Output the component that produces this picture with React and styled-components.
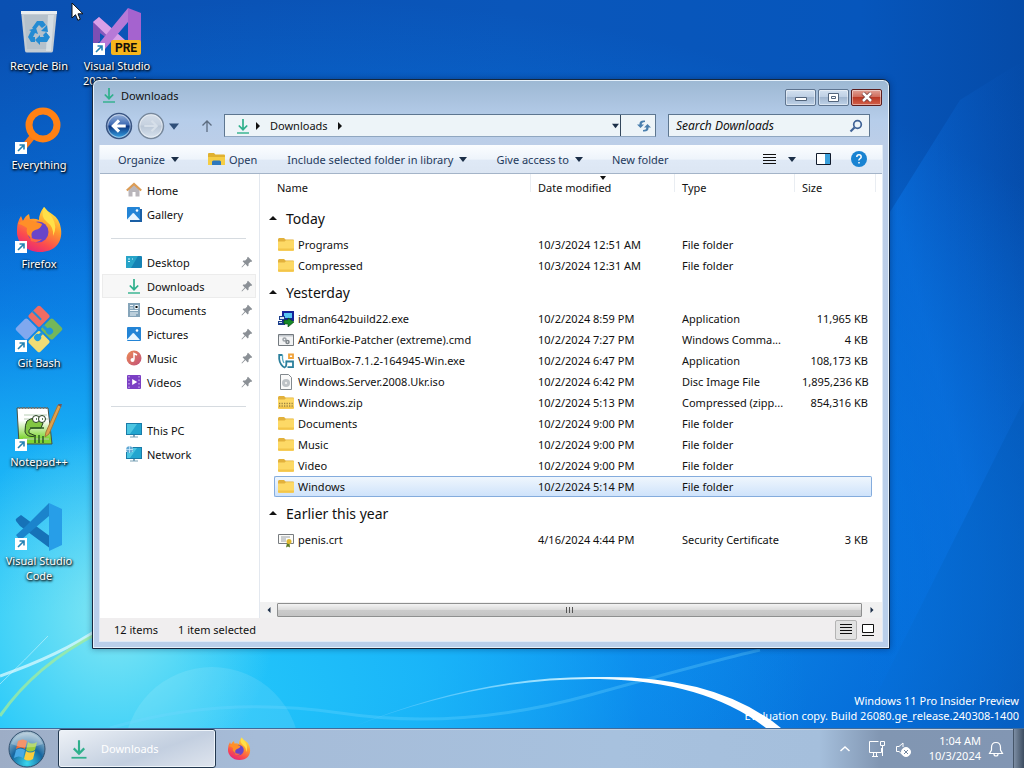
import React from "react";
import styled, { createGlobalStyle } from "styled-components";

const GlobalStyle = createGlobalStyle`
  * {
    box-sizing: border-box;
  }
  body {
    margin: 0;
    font-family: "Noto Sans", "Open Sans", sans-serif;
    font-size: 11px;
    line-height: 15px;
    color: #111;
  }
  button, input {
    font: inherit;
    color: inherit;
  }
  svg {
    display: block;
    flex: none;
    text-shadow: none;
  }
`;

const Screen = styled.div`
  display: flex;
  flex-direction: column;
  height: 100vh;
  overflow: hidden;
`;

const Desktop = styled.main`
  position: relative;
  flex: 1;
  min-height: 0;
  background:
    radial-gradient(ellipse 16% 26% at 11% 84%, rgba(170, 244, 240, 0.7), transparent),
    radial-gradient(ellipse 75% 70% at 4% 98%, #24c8fa 20%, rgba(30, 190, 250, 0.75) 50%, rgba(16, 150, 245, 0.35) 78%, transparent),
    radial-gradient(ellipse 95% 80% at 30% 80%, #0e9cf4 20%, rgba(6, 130, 240, 0.6) 60%, transparent),
    linear-gradient(90deg, #0a50b2 0%, #0a56ba 50%, #0656bc 84%, #054ba8 100%);
`;

const WallpaperArt = styled.svg`
  position: absolute;
  inset: 0;
  width: 100%;
  height: 100%;
`;

const IconGrid = styled.div`
  position: relative;
  display: grid;
  grid-template-columns: repeat(2, 78px);
  grid-auto-rows: 99px;
`;

const Shortcut = styled.button`
  grid-column: ${(props) => props.$column};
  grid-row: ${(props) => props.$row};
  display: flex;
  flex-direction: column;
  align-items: center;
  gap: 2px;
  padding: 8px 0 0;
  border: 0;
  background: none;
  color: #fff;
  text-shadow: 1px 1px 2px #000, 0 1px 3px #000;
`;

const Watermark = styled.p`
  position: absolute;
  right: 5px;
  bottom: 5px;
  margin: 0;
  color: #fff;
  text-align: right;
`;

const Pointer = styled.svg`
  position: absolute;
  left: 71px;
  top: 2px;
`;

const Window = styled.section`
  position: absolute;
  inset: 79px 134px 79px 92px;
  display: flex;
  flex-direction: column;
  padding: 0 6px 6px;
  border: 1px solid #16283e;
  border-radius: 7px 7px 0 0;
  background: linear-gradient(#9db8d3, #b6cdea 40px, #bccee8 64px, #b9cfea 100%);
  box-shadow: inset 0 0 0 1px #e6f1fb, 0 0 6px rgba(0, 20, 60, 0.4);
`;

const TitleBar = styled.header`
  display: flex;
  align-items: center;
  gap: 4px;
  height: 30px;
  padding-left: 2px;
`;

const Title = styled.h1`
  flex: 1;
  margin: 0;
  font-size: 11px;
  font-weight: 400;
`;

const CaptionButtons = styled.div`
  display: flex;
  gap: 2px;
  padding: 4px 1px 0 0;
`;

const CaptionButton = styled.button`
  display: flex;
  align-items: center;
  justify-content: center;
  width: 31px;
  height: 17px;
  padding: 0;
  border: 1px solid ${(props) => (props.$close ? "#5b1d1d" : "#5f7590")};
  border-radius: 2px;
  background: ${(props) =>
    props.$close
      ? "linear-gradient(#e0a296, #cf6a59 48%, #bb3a25 50%, #d3604a)"
      : "linear-gradient(#d3e1f0, #bdcfe4 48%, #a2b7d0 50%, #bfd2e8)"};
  box-shadow: inset 0 0 0 1px rgba(255, 255, 255, 0.45);
`;

const NavBar = styled.div`
  display: flex;
  align-items: center;
  height: 35px;
  padding: 0 13px 4px 6px;
`;

const RoundButtons = styled.div`
  display: flex;
  align-items: center;
  gap: 4px;
  margin-right: 20px;
`;

const PlainButton = styled.button`
  display: flex;
  align-items: center;
  padding: 0;
  border: 0;
  background: none;
`;

const AddressBar = styled.div`
  flex: 1;
  display: flex;
  align-items: center;
  gap: 3px;
  height: 23px;
  margin: 0 12px 0 9px;
  padding-left: 10px;
  border: 1px solid #5d7690;
  border-bottom-color: #8fa6c0;
  background: #edf4f8;
`;

const Crumb = styled.a`
  margin: 0 5px;
  color: inherit;
  text-decoration: none;
`;

const AddressTools = styled.div`
  display: flex;
  align-items: center;
  gap: 15px;
  margin-left: auto;
  padding-right: 3px;
`;

const Divided = styled.span`
  display: flex;
  align-items: center;
  height: 21px;
  padding-right: 1px;
  border-right: 1px solid #34475c;
`;

const SearchBox = styled.label`
  display: flex;
  align-items: center;
  width: 202px;
  height: 23px;
  padding: 0 6px 0 7px;
  border: 1px solid #5d7690;
  border-bottom-color: #8fa6c0;
  background: #edf4f8;
`;

const SearchInput = styled.input`
  flex: 1;
  min-width: 0;
  padding: 0;
  border: 0;
  outline: 0;
  background: none;
  font-size: 12px;
  font-style: italic;
  &::placeholder {
    color: #111;
    opacity: 1;
  }
`;

const Client = styled.div`
  flex: 1;
  display: flex;
  flex-direction: column;
  min-height: 0;
  border: 1px solid #dfeaf6;
  border-top: 0;
  background: #fff;
`;

const Toolbar = styled.div`
  display: flex;
  align-items: center;
  height: 29px;
  padding: 0 15px 0 18px;
  border-bottom: 1px solid #a4b4c8;
  background: linear-gradient(#fbfdff, #eef4fb 50%, #dfe9f6 55%, #dce6f3);
  color: #1e395b;
`;

const ToolButton = styled(PlainButton)`
  gap: ${(props) => props.$gap || 6}px;
  margin-right: ${(props) => props.$after || 29}px;
`;

const ToolbarEnd = styled.div`
  display: flex;
  align-items: center;
  gap: 20px;
  margin-left: auto;
`;

const ViewButton = styled(PlainButton)`
  gap: 12px;
`;

const Panes = styled.div`
  flex: 1;
  display: flex;
  min-height: 0;
`;

const NavPane = styled.nav`
  width: 160px;
  padding: 4px 3px 0 2px;
  border-right: 1px solid #e3e8ef;
`;

const NavItem = styled.a`
  display: flex;
  align-items: center;
  gap: 5px;
  height: 24px;
  padding: 0 2px 0 23px;
  border: 1px solid ${(props) => (props.$current ? "#ececec" : "transparent")};
  background: ${(props) => (props.$current ? "#f7f7f7" : "none")};
  color: inherit;
  text-decoration: none;
`;

const NavText = styled.span`
  flex: 1;
`;

const NavRule = styled.hr`
  margin: 12px 10px 11px 9px;
  border: 0;
  border-top: 1px solid #d6dbe0;
`;

const ListPane = styled.div`
  flex: 1;
  display: flex;
  flex-direction: column;
  min-width: 0;
`;

const ListBody = styled.div`
  flex: 1;
  min-height: 0;
  padding-right: 6px;
`;

const FileTable = styled.table`
  width: 100%;
  table-layout: fixed;
  border-collapse: separate;
  border-spacing: 0;
`;

const Col = styled.col`
  width: ${(props) => (props.$width ? `${props.$width}px` : "auto")};
`;

const Heading = styled.th`
  position: relative;
  height: 28px;
  padding: 0 0 2px ${(props) => props.$indent || 7}px;
  background: linear-gradient(#e9edf2, #e9edf2) right top / 1px 18px no-repeat;
  font-weight: 400;
  text-align: left;
`;

const SortMark = styled.svg`
  position: absolute;
  left: 50%;
  top: 2px;
  transform: translateX(-50%);
`;

const GroupHead = styled.th`
  height: 32px;
  padding: 2px 0 0 9px;
  font-size: 14px;
  font-weight: 400;
  line-height: 20px;
  text-align: left;
`;

const GroupLabel = styled.span`
  display: flex;
  align-items: center;
  gap: 9px;
`;

const Cell = styled.td`
  height: 21px;
  padding: 0 ${(props) => (props.$right ? 4 : 0)}px 0 7px;
  border: 0 solid #84acdd;
  text-align: ${(props) => (props.$right ? "right" : "left")};
  white-space: nowrap;
`;

const NameCell = styled(Cell)`
  padding-left: ${(props) => (props.$selected ? 3 : 4)}px;
`;

const FileRow = styled.tr`
  ${(props) =>
    props.$selected &&
    `
    ${Cell} {
      border-top-width: 1px;
      border-bottom-width: 1px;
      background: linear-gradient(#eff6fd, #cfe3fb);
    }
    ${Cell}:nth-child(2) {
      border-left-width: 1px;
      border-radius: 2px 0 0 2px;
    }
    ${Cell}:last-child {
      border-right-width: 1px;
      border-radius: 0 2px 2px 0;
    }
  `}
`;

const FileName = styled.span`
  display: flex;
  align-items: center;
  gap: 4px;
`;

const ScrollBar = styled.div`
  display: flex;
  align-items: center;
  height: 16px;
  background: #f1f1f1;
`;

const ScrollArrow = styled(PlainButton)`
  justify-content: center;
  width: ${(props) => props.$width}px;
`;

const ScrollThumb = styled.div`
  flex: 1;
  display: flex;
  align-items: center;
  justify-content: center;
  height: 14px;
  border: 1px solid #8e8f8f;
  border-radius: 1px;
  background: linear-gradient(#f3f3f3, #dcdcdc 48%, #cbcbcb 52%, #c4c4c4);
`;

const StatusBar = styled.footer`
  display: flex;
  align-items: center;
  gap: 20px;
  height: 23px;
  padding: 0 7px 0 14px;
  background: #f0eeef;
`;

const StatusViews = styled.div`
  display: flex;
  align-items: center;
  gap: 4px;
  margin-left: auto;
`;

const StatusView = styled(PlainButton)`
  justify-content: center;
  width: ${(props) => (props.$pressed ? 22 : 14)}px;
  height: 20px;
  border: 1px solid ${(props) => (props.$pressed ? "#b4b4b4" : "transparent")};
  border-radius: 2px;
  background: ${(props) => (props.$pressed ? "#e2e2e2" : "none")};
`;

const Taskbar = styled.footer`
  display: flex;
  align-items: center;
  height: 40px;
  border-top: 1px solid #3f6b9c;
  background: linear-gradient(90deg, #9dadc6, #a6bcd8 25%, #a7c1de 60%, #a5bfdc 80%, #8196b2 86%, #8296b3);
  box-shadow: inset 0 1px 0 #c2d0e0;
`;

const StartButton = styled(PlainButton)`
  justify-content: center;
  width: 58px;
  padding-right: 4px;
`;

const TaskButton = styled.button`
  display: flex;
  align-items: center;
  gap: 12px;
  width: 158px;
  height: 39px;
  padding: 0 10px;
  margin-right: 11px;
  border: 1px solid #22384f;
  border-radius: 3px;
  background: linear-gradient(160deg, #eef2f7, #c9d4e3 50%, #c3cfe0 60%, #dfe5ee);
  box-shadow: inset 0 0 0 1px #eef4fa;
  color: #fff;
`;

const Tray = styled.div`
  display: flex;
  align-items: center;
  gap: 9px;
  height: 100%;
  margin-left: auto;
  color: #fff;
`;

const HiddenIcons = styled(PlainButton)`
  margin-right: 4px;
`;

const Clock = styled.time`
  margin: 0 -2px 0 7px;
  padding-bottom: 2px;
  text-align: right;
`;

const ShowDesktop = styled.button`
  width: 11px;
  height: 100%;
  padding: 0;
  border: 0;
  border-left: 1px solid #46566a;
  background: linear-gradient(90deg, #7d8ea4, #3c4c60);
`;

const Caret = ({ dir = "down", size = 8, color = "#1c2f48" }) => {
  const points = {
    down: "0,2 8,2 4,7",
    up: "0,5 8,5 4,1",
    right: "2,0 6,4 2,8",
    left: "6,0 2,4 6,8",
  };
  return (
    <svg width={size} height={size} viewBox="0 0 8 8" aria-hidden="true">
      <polygon points={points[dir]} fill={color} />
    </svg>
  );
};

const DownloadIcon = ({ size = 16 }) => (
  <svg width={size} height={size} viewBox="0 0 16 16" fill="none" stroke="#2fb08c" aria-hidden="true">
    <path d="M8 1v10.5M3.8 7.5 8 11.700l4.200-4.200" strokeWidth="1.700" />
    <path d="M2 15h12" strokeWidth="1.400" />
  </svg>
);

const FolderIcon = ({ zip }) => (
  <svg width="16" height="16" viewBox="0 0 16 16" aria-hidden="true">
    <path d="M0 2.500Q0 1 1.200 1H6l1.600 1.600H15q1 0 1 1V6H0z" fill="#e2b13c" />
    <path d="M0 4.500h6.500L8 3.200h8v9.500q0 1-1 1H1q-1 0-1-1z" fill="#fdd966" />
    <path d="M0 11.500h16v1.300q0 .9-1 .9H1q-1 0-1-.9z" fill="#f3c549" />
    {zip && <path d="M1 8.500h14M1 11h14" stroke="#9b8443" strokeWidth="1.400" strokeDasharray="1.300 1.200" />}
  </svg>
);

const OpenFolderIcon = () => (
  <svg width="17" height="16" viewBox="0 0 17 16" aria-hidden="true">
    <path d="M0 3q0-1 1-1h5l1.400 1.500H16q1 0 1 1V14H0z" fill="#e0b130" />
    <path d="M0 6h17v8H0z" fill="#f5cd45" />
    <path d="M4 14v-3q0-1.500 1.500-1.500h6q1.500 0 1.500 1.500v3z" fill="#2c77bd" />
  </svg>
);

const PinIcon = () => (
  <svg width="12" height="12" viewBox="0 0 12 12" aria-hidden="true">
    <path d="M7 .8 11.200 5l-1 .9-.7-.1-2 2 .1 1.800-.9.8-2.300-2.300L1 11.400l-.5-.5L3.700 7.500 1.600 5.300l.8-.8 1.800.1 2-2-.1-.8z" fill="#8b9096" />
  </svg>
);

const HomeIcon = () => (
  <svg width="16" height="16" viewBox="0 0 16 16" aria-hidden="true">
    <path d="M2.500 7 8 2.500 13.500 7v7.500h-4V10h-3v4.500h-4z" fill="#b9b6bb" />
    <path d="M.8 8.500 8 2l7.200 6.500" fill="none" stroke="#dc9c55" strokeWidth="2.200" />
  </svg>
);

const PictureIcon = ({ stack }) => (
  <svg width="16" height="16" viewBox="0 0 16 16" aria-hidden="true">
    {stack && <path d="M4 3h12v13H4z" fill="#1a5fa5" />}
    <rect x="1" y="1" width={stack ? 13 : 14} height={stack ? 13 : 14} rx="1" fill="#2384d6" />
    <path d="M1 13.500 6.500 7.500q.8-.8 1.600 0l5.500 6v.5H1z" fill="#e8f5ff" />
    <circle cx="11" cy="4.500" r="1.300" fill="#fff" />
  </svg>
);

const MonitorIcon = ({ network, panel }) => (
  <svg width="16" height="16" viewBox="0 0 16 16" aria-hidden="true">
    {panel ? (
      <>
        <rect y="2" width="16" height="12" rx="1" fill="#1582b4" />
        <path d="M0 3q0-1 1-1h11L5 14H1q-1 0-1-1z" fill="#27a4c8" />
        <path d="M2 5h2M2 7.500h2M6 5h1" stroke="#d5f5ff" />
      </>
    ) : (
      <>
        <path d="M0 1h16v12H0z" fill="#1a7ba8" />
        <path d="M1 2h14v10H1z" fill="#22a5cf" />
        <path d="M1 2h10L4 12H1z" fill="#4cc6e2" />
        <path d="M7 13h2v1.500h3v1H4v-1h3z" fill="#7da4b8" />
      </>
    )}
    {network && (
      <>
        <path d="M0 0h6.500v6H0z" fill="#fff" />
        <circle cx="3.500" cy="3.500" r="3.300" fill="#62a8d4" />
        <path d="M0 3.500h7M3.500 0v7" stroke="#d8efff" strokeWidth=".7" />
      </>
    )}
  </svg>
);

const DocumentIcon = () => (
  <svg width="16" height="16" viewBox="0 0 16 16" aria-hidden="true">
    <path d="M2 1h12v14H2z" fill="#86a5ba" />
    <path d="M4 3.500h3M4 6h3M4 8.500h8M4 11h8M4 13h6M9 3.500h3v3H9z" stroke="#eff7fb" />
  </svg>
);

const MusicIcon = () => (
  <svg width="16" height="16" viewBox="0 0 16 16" aria-hidden="true">
    <defs>
      <linearGradient id="music" x1="0" x2="1" y2="1">
        <stop stopColor="#ec8c55" />
        <stop offset="1" stopColor="#c2507a" />
      </linearGradient>
    </defs>
    <circle cx="8" cy="8" r="7.500" fill="url(#music)" />
    <path d="M8 9.500V3.500l3 1.500" fill="none" stroke="#fff" strokeWidth="1.500" />
    <circle cx="6.500" cy="10" r="2" fill="#fff" />
  </svg>
);

const VideoIcon = () => (
  <svg width="16" height="16" viewBox="0 0 16 16" aria-hidden="true">
    <rect x="1" y="1" width="14" height="14" rx="1" fill="#7b3fc4" />
    <path d="M3 2v12M13 2v12" stroke="#d6bdf4" strokeDasharray="1.500 2" />
    <path d="M6.200 5v6l5-3z" fill="#fff" />
  </svg>
);

const InstallerIcon = () => (
  <svg width="16" height="16" viewBox="0 0 16 16" aria-hidden="true">
    <path d="M4 0h12v10H4z" fill="#16239a" />
    <path d="M6 2h8v5H6z" fill="#58c5f2" />
    <path d="M1 5h6v4H1zM0 10h7v4H0z" fill="#1c3f8c" />
    <path d="M2 6h4v2H2zM1 11h3v1H1z" fill="#e0e8f0" />
    <path d="M6 9h4V7l6 4-6 5v-3H6z" fill="#168a28" stroke="#07400e" strokeWidth=".6" />
  </svg>
);

const ScriptIcon = () => (
  <svg width="16" height="16" viewBox="0 0 16 16" aria-hidden="true">
    <path d="M.5 2.500h15v11H.5z" fill="#f2f3f4" stroke="#73797e" />
    <path d="M1 3h14v1.500H1z" fill="#c0c5ca" />
    <circle cx="6.500" cy="7.500" r="1.500" fill="none" stroke="#9da3a8" strokeWidth="1.500" />
    <circle cx="9.500" cy="10" r="1.500" fill="none" stroke="#7d8489" strokeWidth="1.500" />
  </svg>
);

const VirtualBoxIcon = () => (
  <svg width="16" height="16" viewBox="0 0 16 16" fill="none" aria-hidden="true">
    <path d="M4.500 2H1.200v4q.3 3 2 5.500T6.500 14.500q1.800-.5 1.800-3V7.500" stroke="#2b7f9c" strokeWidth="1.800" />
    <path d="M4.500 2v3.500q.2 2 1.500 4.500" stroke="#55aac2" strokeWidth="1.300" />
    <path d="M8.500 8.500H15v5.700H9.500" stroke="#2b7f9c" strokeWidth="1.800" />
    <path d="M11 1.500h4v3.500h-4z" stroke="#f0a23a" strokeWidth="1.800" />
  </svg>
);

const DiscFileIcon = () => (
  <svg width="16" height="16" viewBox="0 0 16 16" aria-hidden="true">
    <path d="M2.500.5h8l3 3v12h-11z" fill="#fafafa" stroke="#83898e" />
    <circle cx="8" cy="9" r="4" fill="#bdc2c6" />
    <circle cx="8" cy="9" r="1.200" fill="#eee" />
  </svg>
);

const CertificateIcon = () => (
  <svg width="16" height="16" viewBox="0 0 16 16" aria-hidden="true">
    <path d="M.5 2.500h15v9H.5z" fill="#fbfbf8" stroke="#787c80" />
    <path d="M3 5h9M3 7h5M3 9h5" stroke="#9aa0a6" />
    <path d="m9 11-1 4.500 2-1 2 1L11.500 11z" fill="#5d7a25" />
    <circle cx="11" cy="9.500" r="2.500" fill="#dfb82e" />
  </svg>
);

const ShortcutArrow = () => (
  <>
    <path d="M0 35h12v12H0z" fill="#fff" />
    <path d="M3 44 9 38M4.500 38H9v4.500" fill="none" stroke="#2382b4" strokeWidth="1.600" />
  </>
);

const FirefoxArt = () => (
  <>
    <defs>
      <linearGradient id="fox" x1=".8" y1="0" x2=".3" y2="1">
        <stop stopColor="#fff04a" />
        <stop offset=".4" stopColor="#ff9a2c" />
        <stop offset=".75" stopColor="#fb4a4f" />
        <stop offset="1" stopColor="#e4257c" />
      </linearGradient>
    </defs>
    <path d="M29 1q3 4 8 7 8 5 9 15c2 14-7 23-21 23S1 36 2 24q0-8 4-14l2 5q2-5 6-7l1 5q5-1 9 1 0-7 5-13z" fill="url(#fox)" />
    <circle cx="23" cy="26" r="10.500" fill="#6a45c9" />
    <path d="M3 18q5-5 12-4l6 2q4 1 6 2-1 5-7 6-5 2-3 8-7-3-5-10Q6 18 3 18z" fill="#ff8f28" />
    <path d="M29 1q5 6 8 10 6 10 1 19 1-9-6-14-7-5-3-15z" fill="#ffe048" />
    <path d="M14 29q4 6 13 4-4 5-11 2z" fill="#ff6840" />
  </>
);

const Art = ({ children, arrow = true }) => (
  <svg width="48" height="48" viewBox="0 0 48 48" aria-hidden="true">
    {children}
    {arrow && <ShortcutArrow />}
  </svg>
);

const RecycleArt = () => (
  <Art arrow={false}>
    <path d="M6 3h36l-4 40q-.3 1.500-2 1.500H12q-1.700 0-2-1.500z" fill="#c4ccd3" />
    <path d="M6 3h36v3H6z" fill="#e9eef1" />
    <path d="M9 7h30l-3 34H12z" fill="#afbcc7" opacity=".7" />
    <path d="M33 7h6l-3 36h-5z" fill="#dfe5e9" opacity=".8" />
    <g fill="#238bd3">
      <path d="m17 20 5-7h6l3 4-4 3-3-3-4 5z" />
      <path d="m32 17 1 7-7-1zM31 24l4 5-3 5h-7v-5h4l-1-2z" />
      <path d="m25 27-5 5 5 5zM20 29v5h-4l-3-5 3-6-2-1 7-2 2 6-3-1-2 4z" />
    </g>
  </Art>
);

const VisualStudioArt = () => (
  <Art>
    <path d="M0 14 6 9l31 28-7 5L0 20z" fill="#8459bd" />
    <path d="M0 14v25l7-6V19z" fill="#7d4fb4" />
    <path d="M0 14 6 9l26 23-7 6z" fill="#d9a0e8" />
    <path d="M3 39 35 0v14L12 41z" fill="#b779d7" />
    <path d="m35 0 13 5v36H35z" fill="#a563cf" />
    <rect x="18" y="32" width="30" height="15" rx="2" fill="#f7b51d" />
    <text x="33" y="44" textAnchor="middle" fontFamily="Roboto, sans-serif" fontSize="12" fontWeight="700" fill="#16100a">
      PRE
    </text>
  </Art>
);

const EverythingArt = () => (
  <Art>
    <path d="m18 29-9 11" stroke="#f5781a" strokeWidth="6" />
    <circle cx="28" cy="18" r="14" fill="none" stroke="#ff8114" strokeWidth="7" />
  </Art>
);

const FirefoxDesktopArt = () => (
  <Art>
    <FirefoxArt />
  </Art>
);

const GitArt = () => (
  <Art>
    <g transform="rotate(45 24 24)">
      <rect x="7" y="7" width="16" height="16" rx="2" fill="#ef6c63" />
      <rect x="25" y="7" width="16" height="16" rx="2" fill="#74b75a" />
      <rect x="7" y="25" width="16" height="16" rx="2" fill="#80a8ef" />
      <rect x="25" y="25" width="16" height="16" rx="2" fill="#f2dc75" />
      <path d="M7 16h12" stroke="#1f8fd6" strokeWidth="2" />
      <path d="M24 19h8M29 24v8" stroke="#1f95d8" strokeWidth="3" />
      <circle cx="33" cy="18" r="3.500" fill="#1f95d8" />
      <circle cx="29" cy="31" r="3.500" fill="#1f9ce0" />
    </g>
  </Art>
);

const NotepadArt = () => (
  <Art>
    <defs>
      <linearGradient id="pad" x2="0" y2="1">
        <stop offset=".35" stopColor="#fff" />
        <stop offset=".85" stopColor="#7ed532" />
      </linearGradient>
    </defs>
    <path d="M2 4h31l4 36H4z" fill="url(#pad)" stroke="#465145" />
    <path d="M4 4h29" stroke="#777" strokeWidth="2" strokeDasharray="1 2" />
    <path d="M9 11h23M9 15h24M8 35h26" stroke="#b9ceb7" />
    <path d="M12 17q7-5 13-1l3 3-2 5h-7q-6 0-5 5l7 3q-9 2-11-4 0-8 2-11z" fill="#83c742" stroke="#263e20" />
    <circle cx="21" cy="15" r="3.500" fill="#fff" stroke="#263e20" />
    <circle cx="27" cy="15" r="3.500" fill="#fff" stroke="#263e20" />
    <path d="M21 15h1M27 15h1M15 24h14M20 33v6M24 31v8M28 32v7" stroke="#2c5e25" strokeWidth="1.500" />
    <path d="m30 33 1-5L43 1l3 1-12 28z" fill="#e0a14c" stroke="#a3773a" />
    <path d="m43 1 1-2 3 1-1 3z" fill="#6d5960" />
  </Art>
);

const CodeArt = () => (
  <Art>
    <path d="M1 18q-1-2 1-3l4-3 30 22v12L5 23z" fill="#1672b8" />
    <path d="m1 32 10-9L34 0v13L7 36q-2 1-3 0z" fill="#1b84cc" />
    <path d="m34 0 13 6v36l-13 6z" fill="#279ee8" />
  </Art>
);

const StartOrb = () => (
  <svg width="38" height="38" viewBox="0 0 38 38" aria-hidden="true">
    <defs>
      <radialGradient id="orb" cx=".5" cy=".9" r=".9">
        <stop stopColor="#39d7ee" />
        <stop offset=".5" stopColor="#16669f" />
        <stop offset="1" stopColor="#b6cbd8" />
      </radialGradient>
    </defs>
    <circle cx="19" cy="19" r="18" fill="url(#orb)" stroke="#31506e" />
    <path d="M10 11q5-3 9 0l-2 8q-4-3-9 0z" fill="#ef6b32" />
    <path d="M20 12q4 3 9 0l-2 8q-5 3-9 0z" fill="#9acb3d" />
    <path d="M8 20q4-3 9 0l-2 8q-4-3-9 0z" fill="#48a9e5" />
    <path d="M18 21q4 3 9 0l-2 8q-5 3-9 0z" fill="#fbcd3c" />
    <path d="M3 14a17 17 0 0 1 32 0Q19 21 3 14z" fill="#fff" opacity=".28" />
  </svg>
);

const NavArrow = ({ forward }) => (
  <svg width="28" height="28" viewBox="0 0 27 27" aria-hidden="true">
    <defs>
      <linearGradient id={forward ? "fwd" : "back"} x2="0" y2="1">
        <stop stopColor={forward ? "#d5dfea" : "#9cb6dc"} />
        <stop offset=".46" stopColor={forward ? "#c6d1df" : "#3c68b2"} />
        <stop offset=".5" stopColor={forward ? "#b9c6d6" : "#0d3580"} />
        <stop offset="1" stopColor={forward ? "#d9e4f0" : "#37a6e8"} />
      </linearGradient>
    </defs>
    <circle
      cx="13.500"
      cy="13.500"
      r="12"
      fill={forward ? "url(#fwd)" : "url(#back)"}
      stroke={forward ? "#77889c" : "#3b5683"}
      strokeWidth="1.500"
    />
    <circle cx="13.500" cy="13.500" r="10.800" fill="none" stroke="#fff" opacity=".5" />
    <path
      d={forward ? "M7 13.500h12M14 8.500l5 5-5 5" : "M20 13.500H8M13.500 8l-5.500 5.500 5.500 5.500"}
      fill="none"
      stroke={forward ? "#d6dfe9" : "#fff"}
      strokeWidth={forward ? 2 : 3}
    />
  </svg>
);

const Waves = () => (
  <WallpaperArt viewBox="0 0 1024 728" preserveAspectRatio="none" fill="none" aria-hidden="true">
    <defs>
      <linearGradient id="arc">
        <stop stopColor="#5cc8ff" stopOpacity=".3" />
        <stop offset=".4" stopColor="#8ddcff" />
        <stop offset=".65" stopColor="#fff" />
      </linearGradient>
      <linearGradient id="beam" x1="0" y1="1" x2="1" y2="0">
        <stop stopColor="#0078f0" stopOpacity="0" />
        <stop offset=".5" stopColor="#0a74e6" stopOpacity=".55" />
        <stop offset="1" stopColor="#0a5cc8" stopOpacity="0" />
      </linearGradient>
    </defs>
    <path d="M860 728V260L960 100l64-40v340z" fill="url(#beam)" />
    <circle cx="212" cy="755" r="88" fill="#fff" opacity=".1" />
    <path d="M110 728Q220 695 340 713T590 695 760 650" stroke="#6fd8ff" strokeWidth="3" opacity=".3" />
    <path d="M350 728Q480 677 600 679 705 681 766 728h15Q716 675 600 677 480 675 350 728z" fill="url(#arc)" />
    <path d="M0 676Q60 655 100 628" stroke="#e4fcff" strokeWidth="3" opacity=".7" />
    <path d="M0 716Q35 665 100 632" stroke="#a3ec9a" strokeWidth="3" opacity=".75" />
    <path d="M0 684Q25 660 48 636" stroke="#e4fcff" opacity=".5" />
  </WallpaperArt>
);

const shortcuts = [
  { label: ["Recycle Bin"], art: RecycleArt, column: 1, row: 1 },
  { label: ["Everything"], art: EverythingArt, column: 1, row: 2 },
  { label: ["Firefox"], art: FirefoxDesktopArt, column: 1, row: 3 },
  { label: ["Git Bash"], art: GitArt, column: 1, row: 4 },
  { label: ["Notepad++"], art: NotepadArt, column: 1, row: 5 },
  { label: ["Visual Studio", "Code"], art: CodeArt, column: 1, row: 6 },
  { label: ["Visual Studio", "2022 Preview"], art: VisualStudioArt, column: 2, row: 1 },
];

const places = [
  [
    { label: "Home", icon: <HomeIcon /> },
    { label: "Gallery", icon: <PictureIcon stack /> },
  ],
  [
    { label: "Desktop", icon: <MonitorIcon panel />, pinned: true },
    { label: "Downloads", icon: <DownloadIcon />, pinned: true, current: true },
    { label: "Documents", icon: <DocumentIcon />, pinned: true },
    { label: "Pictures", icon: <PictureIcon />, pinned: true },
    { label: "Music", icon: <MusicIcon />, pinned: true },
    { label: "Videos", icon: <VideoIcon />, pinned: true },
  ],
  [
    { label: "This PC", icon: <MonitorIcon /> },
    { label: "Network", icon: <MonitorIcon network /> },
  ],
];

const groups = [
  {
    title: "Today",
    files: [
      { name: "Programs", date: "10/3/2024 12:51 AM", type: "File folder", icon: <FolderIcon /> },
      { name: "Compressed", date: "10/3/2024 12:31 AM", type: "File folder", icon: <FolderIcon /> },
    ],
  },
  {
    title: "Yesterday",
    files: [
      { name: "idman642build22.exe", date: "10/2/2024 8:59 PM", type: "Application", size: "11,965 KB", icon: <InstallerIcon /> },
      { name: "AntiForkie-Patcher (extreme).cmd", date: "10/2/2024 7:27 PM", type: "Windows Comma...", size: "4 KB", icon: <ScriptIcon /> },
      { name: "VirtualBox-7.1.2-164945-Win.exe", date: "10/2/2024 6:47 PM", type: "Application", size: "108,173 KB", icon: <VirtualBoxIcon /> },
      { name: "Windows.Server.2008.Ukr.iso", date: "10/2/2024 6:42 PM", type: "Disc Image File", size: "1,895,236 KB", icon: <DiscFileIcon /> },
      { name: "Windows.zip", date: "10/2/2024 5:13 PM", type: "Compressed (zipp...", size: "854,316 KB", icon: <FolderIcon zip /> },
      { name: "Documents", date: "10/2/2024 9:00 PM", type: "File folder", icon: <FolderIcon /> },
      { name: "Music", date: "10/2/2024 9:00 PM", type: "File folder", icon: <FolderIcon /> },
      { name: "Video", date: "10/2/2024 9:00 PM", type: "File folder", icon: <FolderIcon /> },
      { name: "Windows", date: "10/2/2024 5:14 PM", type: "File folder", icon: <FolderIcon />, selected: true },
    ],
  },
  {
    title: "Earlier this year",
    files: [
      { name: "penis.crt", date: "4/16/2024 4:44 PM", type: "Security Certificate", size: "3 KB", icon: <CertificateIcon /> },
    ],
  },
];

const FileList = () => (
  <FileTable>
    <colgroup>
      <Col $width={14} />
      <Col />
      <Col $width={144} />
      <Col $width={120} />
      <Col $width={77} />
      <Col $width={4} />
    </colgroup>
    <thead>
      <tr>
        <Heading colSpan={2} $indent={17}>Name</Heading>
        <Heading>
          Date modified
          <SortMark width="6" height="4" viewBox="0 0 6 4" aria-hidden="true">
            <path d="M0 0h6L3 4z" fill="#111" />
          </SortMark>
        </Heading>
        <Heading>Type</Heading>
        <Heading colSpan={2}>Size</Heading>
      </tr>
    </thead>
    {groups.map((group) => (
      <tbody key={group.title}>
        <tr>
          <GroupHead colSpan={6} scope="rowgroup">
            <GroupLabel>
              <Caret dir="up" color="#111" />
              {group.title}
            </GroupLabel>
          </GroupHead>
        </tr>
        {group.files.map((file) => (
          <FileRow key={file.name} $selected={file.selected}>
            <td />
            <NameCell $selected={file.selected}>
              <FileName>
                {file.icon}
                {file.name}
              </FileName>
            </NameCell>
            <Cell>{file.date}</Cell>
            <Cell>{file.type}</Cell>
            <Cell $right>{file.size}</Cell>
          </FileRow>
        ))}
      </tbody>
    ))}
  </FileTable>
);

const Explorer = () => (
  <Window aria-label="Downloads">
    <TitleBar>
      <DownloadIcon />
      <Title>Downloads</Title>
      <CaptionButtons>
        <CaptionButton aria-label="Minimize">
          <svg width="12" height="9">
            <path d="M.5 4.500h11v3H.5z" fill="#fff" stroke="#53657c" />
          </svg>
        </CaptionButton>
        <CaptionButton aria-label="Maximize">
          <svg width="11" height="9">
            <path d="M.5.500h10v8H.5zM3.500 3.500h4v2h-4z" fill="#fff" stroke="#53657c" />
          </svg>
        </CaptionButton>
        <CaptionButton $close aria-label="Close">
          <svg width="12" height="10" viewBox="0 0 12 10">
            <path d="m2 1 8 8M10 1 2 9" stroke="#6d3434" strokeWidth="4" />
            <path d="m2 1 8 8M10 1 2 9" stroke="#fff" strokeWidth="2.500" />
          </svg>
        </CaptionButton>
      </CaptionButtons>
    </TitleBar>
    <NavBar>
      <RoundButtons>
        <PlainButton aria-label="Back"><NavArrow /></PlainButton>
        <PlainButton aria-label="Forward"><NavArrow forward /></PlainButton>
        <PlainButton aria-label="Recent locations"><Caret size={10} color="#2f4f79" /></PlainButton>
      </RoundButtons>
      <PlainButton aria-label="Up">
        <svg width="16" height="16" fill="none" stroke="#5c6c80" strokeWidth="1.300">
          <path d="M8 14V3M3.500 7.500 8 3l4.500 4.500" />
        </svg>
      </PlainButton>
      <AddressBar>
        <DownloadIcon />
        <PlainButton aria-label="Browse folders"><Caret dir="right" color="#111" /></PlainButton>
        <Crumb href="#downloads">Downloads</Crumb>
        <Caret dir="right" color="#111" />
        <AddressTools>
          <Divided>
            <PlainButton aria-label="Previous locations"><Caret size={7} /></PlainButton>
          </Divided>
          <PlainButton aria-label="Refresh">
            <svg width="16" height="14" viewBox="0 0 16 14" fill="#4a7fae">
              <path d="M9 1.500q-6-.5-5.500 4H1l3.500 3.500L8 5.500H5.700Q5.500 3 9 3z" />
              <path d="M7 12.500q6 .5 5.500-4H15L11.500 5 8 8.500h2.300q.2 2.500-3.300 2.500z" />
            </svg>
          </PlainButton>
        </AddressTools>
      </AddressBar>
      <SearchBox>
        <SearchInput type="search" placeholder="Search Downloads" aria-label="Search Downloads" />
        <svg width="14" height="14" fill="none" stroke="#3f6296" aria-hidden="true">
          <circle cx="8.500" cy="5.500" r="3.800" strokeWidth="1.700" />
          <path d="M5.500 8.500 1.500 12.500" strokeWidth="2.200" />
        </svg>
      </SearchBox>
    </NavBar>
    <Client>
      <Toolbar>
        <ToolButton>Organize <Caret /></ToolButton>
        <ToolButton $gap={4} $after={30}><OpenFolderIcon />Open</ToolButton>
        <ToolButton>Include selected folder in library <Caret /></ToolButton>
        <ToolButton>Give access to <Caret /></ToolButton>
        <ToolButton>New folder</ToolButton>
        <ToolbarEnd>
          <ViewButton aria-label="Change view">
            <svg width="13" height="11" stroke="#111">
              <path d="M0 .5h13M0 3.500h13M0 6.500h13M0 9.500h13" />
            </svg>
            <Caret />
          </ViewButton>
          <PlainButton aria-label="Preview pane">
            <svg width="15" height="12">
              <path d="M.5.500h14v11H.5z" fill="#fff" stroke="#111b2c" />
              <path d="M9 1h5v10H9z" fill="#3aa0dc" />
            </svg>
          </PlainButton>
          <PlainButton aria-label="Help">
            <svg width="16" height="16" viewBox="0 0 16 16">
              <circle cx="8" cy="8" r="8" fill="#1983d2" />
              <path d="M5.800 6q0-2.200 2.200-2.200T10.200 6q0 1-1.200 1.700T8 9.500M8 11v1.500" fill="none" stroke="#fff" strokeWidth="1.500" />
            </svg>
          </PlainButton>
        </ToolbarEnd>
      </Toolbar>
      <Panes>
        <NavPane>
          {places.map((section, index) => (
            <React.Fragment key={index}>
              {index > 0 && <NavRule />}
              {section.map((place) => (
                <NavItem key={place.label} href={`#${place.label}`} $current={place.current}>
                  {place.icon}
                  <NavText>{place.label}</NavText>
                  {place.pinned && <PinIcon />}
                </NavItem>
              ))}
            </React.Fragment>
          ))}
        </NavPane>
        <ListPane>
          <ListBody>
            <FileList />
          </ListBody>
          <ScrollBar>
            <ScrollArrow $width={17} aria-label="Scroll left"><Caret dir="left" size={6} /></ScrollArrow>
            <ScrollThumb>
              <svg width="8" height="6" stroke="#555">
                <path d="M.5 0v6M3.500 0v6M6.500 0v6" />
              </svg>
            </ScrollThumb>
            <ScrollArrow $width={20} aria-label="Scroll right"><Caret dir="right" size={6} /></ScrollArrow>
          </ScrollBar>
        </ListPane>
      </Panes>
      <StatusBar>
        <span>12 items</span>
        <span>1 item selected</span>
        <StatusViews>
          <StatusView $pressed aria-label="Details">
            <svg width="12" height="11" stroke="#111">
              <path d="M0 .5h12M0 3.500h12M0 6.500h12M0 9.500h12" />
            </svg>
          </StatusView>
          <StatusView aria-label="Large icons">
            <svg width="12" height="12" fill="#fff" stroke="#111">
              <path d="M.5.500h11v8H.5zM0 11.500h12" />
            </svg>
          </StatusView>
        </StatusViews>
      </StatusBar>
    </Client>
  </Window>
);

const App = () => (
  <Screen>
    <GlobalStyle />
    <Desktop>
      <Waves />
      <IconGrid>
        {shortcuts.map(({ label, art: ArtIcon, column, row }) => (
          <Shortcut key={label.join(" ")} $column={column} $row={row}>
            <ArtIcon />
            <span>
              {label[0]}
              {label[1] && <br />}
              {label[1]}
            </span>
          </Shortcut>
        ))}
      </IconGrid>
      <Watermark>
        Windows 11 Pro Insider Preview
        <br />
        Evaluation copy. Build 26080.ge_release.240308-1400
      </Watermark>
      <Explorer />
      <Pointer width="13" height="20" viewBox="0 0 13 20" aria-hidden="true">
        <path d="M1 1v15l3.500-3.300 2.300 5.600 2.500-1-2.300-5.500H12z" fill="#fff" stroke="#111" />
      </Pointer>
    </Desktop>
    <Taskbar>
      <StartButton aria-label="Start"><StartOrb /></StartButton>
      <TaskButton>
        <DownloadIcon size={20} />
        Downloads
      </TaskButton>
      <PlainButton aria-label="Firefox">
        <svg width="24" height="24" viewBox="0 0 48 48"><FirefoxArt /></svg>
      </PlainButton>
      <Tray>
        <HiddenIcons aria-label="Show hidden icons">
          <svg width="12" height="8" fill="none" stroke="#fff" strokeWidth="1.500">
            <path d="m1.500 6 4.500-4 4.500 4" />
          </svg>
        </HiddenIcons>
        <svg width="22" height="18" fill="none" stroke="#fff" aria-hidden="true">
          <path d="M14.500 1.500h-9v11h12V8M8 16.500h6M9.500 13v3M12.500 13v3M16.500 1.500h4v4h-4zM18.500 5.500V16" />
        </svg>
        <svg width="18" height="16" fill="none" stroke="#fff" aria-hidden="true">
          <path d="M1.500 5.500v5H4l4 3.500M8 6V2L4 5.500H1.500" />
          <circle cx="11" cy="11" r="4.500" fill="#fff" />
          <path d="m9 9 4 4M13 9l-4 4" stroke="#71869f" />
        </svg>
        <Clock>
          1:04 AM
          <br />
          10/3/2024
        </Clock>
        <PlainButton aria-label="Notifications">
          <svg width="16" height="16" fill="none" stroke="#fff" strokeWidth="1.200">
            <path d="M8 1.500q4.500 0 4.500 5V9l2 3.500h-13L3.500 9V6.500q0-5 4.500-5zM6 13q0 2 2 2t2-2" />
          </svg>
        </PlainButton>
        <ShowDesktop aria-label="Show desktop" />
      </Tray>
    </Taskbar>
  </Screen>
);

export default App;
